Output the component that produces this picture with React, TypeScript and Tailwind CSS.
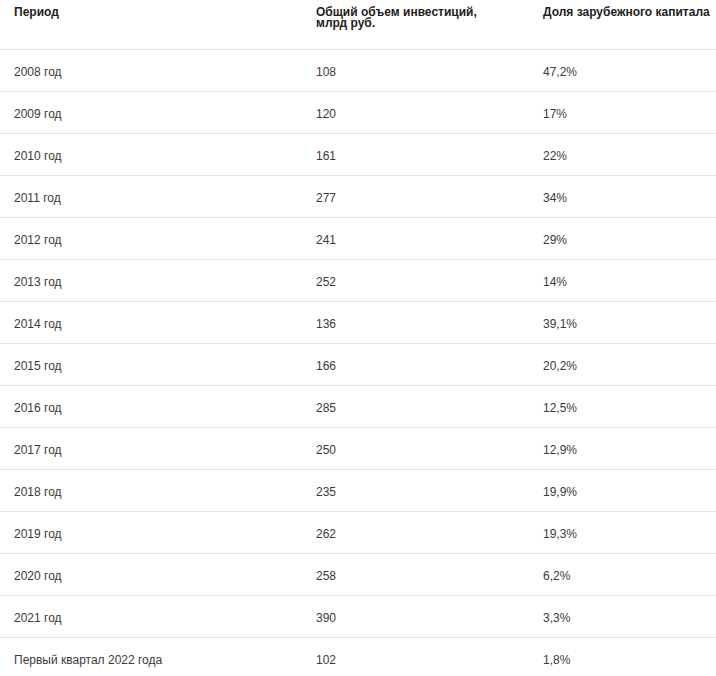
const rows: [string, string, string][] = [
  ['2008 год', '108', '47,2%'],
  ['2009 год', '120', '17%'],
  ['2010 год', '161', '22%'],
  ['2011 год', '277', '34%'],
  ['2012 год', '241', '29%'],
  ['2013 год', '252', '14%'],
  ['2014 год', '136', '39,1%'],
  ['2015 год', '166', '20,2%'],
  ['2016 год', '285', '12,5%'],
  ['2017 год', '250', '12,9%'],
  ['2018 год', '235', '19,9%'],
  ['2019 год', '262', '19,3%'],
  ['2020 год', '258', '6,2%'],
  ['2021 год', '390', '3,3%'],
  ['Первый квартал 2022 года', '102', '1,8%'],
]

export default function App() {
  return (
    <div className="w-[716px] bg-white font-['Liberation_Sans',sans-serif]">
      <table className="w-full border-collapse table-fixed">
        <colgroup>
          <col className="w-[302px]" />
          <col className="w-[227px]" />
          <col />
        </colgroup>
        <thead>
          <tr className="h-[49px] border-b border-[#e3e3e3] text-left align-top text-[12px] font-bold leading-[11px] text-[#222]">
            <th className="px-[14px] pt-[7px]">Период</th>
            <th className="px-[14px] pt-[7px]">
              Общий объем инвестиций,
              <br />
              млрд руб.
            </th>
            <th className="whitespace-nowrap pl-[14px] pt-[7px]">Доля зарубежного капитала</th>
          </tr>
        </thead>
        <tbody>
          {rows.map(([period, total, share]) => (
            <tr
              key={period}
              className="h-[42px] border-b border-[#e3e3e3] text-[12px] text-[#3a3a3a] last:border-b-0"
            >
              <td className="px-[14px] pt-[4px]">{period}</td>
              <td className="px-[14px] pt-[4px]">{total}</td>
              <td className="px-[14px] pt-[4px]">{share}</td>
            </tr>
          ))}
        </tbody>
      </table>
    </div>
  )
}
